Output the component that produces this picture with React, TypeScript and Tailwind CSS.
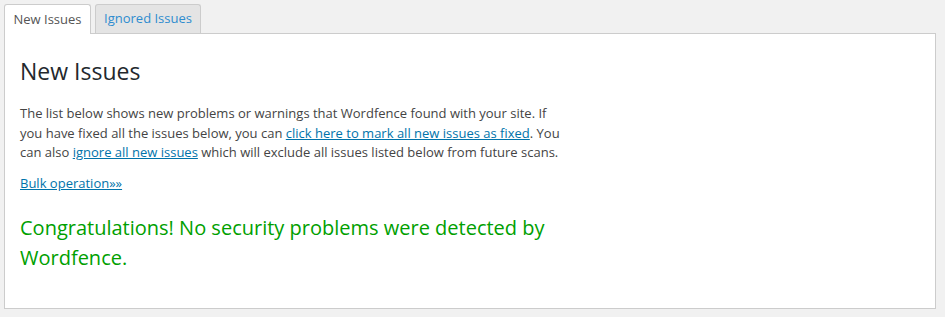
import React from 'react';

export default function App() {
  return (
    <div className="w-[945px] h-[317px] bg-[#f1f1f1] px-[4px] pt-[4px] font-['Open_Sans',sans-serif] text-[13px] text-[#444]">
      <div className="flex items-end gap-[4px] w-[932px]">
        <div className="relative -mb-px z-10 h-[30px] w-[87px] flex items-center justify-center border border-b-0 border-[#ccc] rounded-t-[3px] bg-white text-[#555] text-[13px]">
          New Issues
        </div>
        <div className="h-[29px] w-[106px] flex items-center justify-center border border-b-0 border-[#ccc] rounded-t-[3px] bg-[#e4e4e4] text-[#2e8ccf] text-[13px]">
          Ignored Issues
        </div>
      </div>
      <div className="w-[932px] h-[276px] bg-white border border-[#ccc] px-[15px] pt-[23px]">
        <h2 className="text-[23px] leading-[29px] font-normal text-[#23282d] mb-[18px]">New Issues</h2>
        <p className="w-[545px] leading-[19.5px] mb-[11px]">
          The list below shows new problems or warnings that Wordfence found with your site. If you have fixed all the issues below, you can{' '}
          <a href="#" className="text-[#0073aa] underline">click here to mark all new issues as fixed</a>. You can also{' '}
          <a href="#" className="text-[#0073aa] underline">ignore all new issues</a> which will exclude all issues listed below from future scans.
        </p>
        <p className="leading-[19.5px] mb-[20px]">
          <a href="#" className="text-[#0073aa] underline">Bulk operation»»</a>
        </p>
        <p className="w-[545px] text-[20px] leading-[30px] text-[#00a000]">
          Congratulations! No security problems were detected by Wordfence.
        </p>
      </div>
    </div>
  );
}
